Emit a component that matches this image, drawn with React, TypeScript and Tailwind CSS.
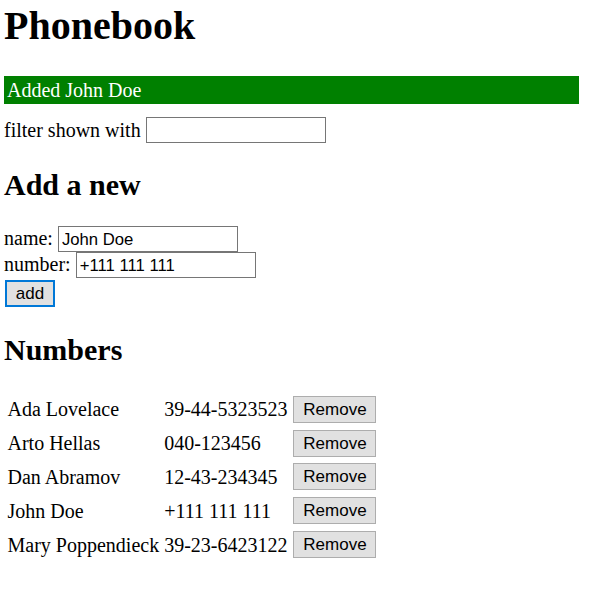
const persons = [
  { name: "Ada Lovelace", number: "39-44-5323523" },
  { name: "Arto Hellas", number: "040-123456" },
  { name: "Dan Abramov", number: "12-43-234345" },
  { name: "John Doe", number: "+111 111 111" },
  { name: "Mary Poppendieck", number: "39-23-6423122" },
];

const inputCls =
  "h-[26px] w-[180px] border border-[#767676] bg-white pl-[3px] pt-[2px] font-['Liberation_Sans',Arial,sans-serif] text-[16.7px] text-black outline-none";

const App = () => {
  return (
    <div className="min-h-[602px] bg-white px-[4px] pt-[3px] font-['Liberation_Serif','Times_New_Roman',serif] text-[20px] leading-[23px] text-black">
      <h1 className="mb-[27px] text-[40px] font-bold leading-[46px]">Phonebook</h1>

      <div className="w-[575px] bg-[#008000] px-[3px] py-[2.5px] text-white">Added John Doe</div>

      <div className="mt-[13px] flex h-[26px] items-center">
        <span>filter shown with</span>
        <input className={`${inputCls} ml-[5px]`} defaultValue="" />
      </div>

      <h2 className="mt-[24px] mb-[23.5px] text-[30px] font-bold leading-[35px]">Add a new</h2>

      <form onSubmit={(e) => e.preventDefault()}>
        <div className="flex h-[26px] items-center">
          <span>name:</span>
          <input className={`${inputCls} ml-[5px]`} defaultValue="John Doe" />
        </div>
        <div className="flex h-[26px] items-center">
          <span>number:</span>
          <input className={`${inputCls} ml-[5px]`} defaultValue="+111 111 111" />
        </div>
        <div className="mt-[2px] flex">
          <button
            type="submit"
            className="ml-[1px] h-[27px] w-[50px] border-2 border-[#0078d7] bg-[#e1e1e1] font-['Liberation_Sans',Arial,sans-serif] text-[17px] leading-none"
          >
            add
          </button>
        </div>
      </form>

      <h2 className="mt-[25px] mb-[25px] text-[30px] font-bold leading-[35px]">Numbers</h2>

      <table className="border-separate border-spacing-[2.5px]">
        <tbody>
          {persons.map((p) => (
            <tr key={p.name}>
              <td className="px-[1.5px] py-[2.4px] pt-[3.5px] whitespace-nowrap">{p.name}</td>
              <td className="py-[2.4px] pt-[3.5px] pr-[2.5px] pl-[1.5px] whitespace-nowrap">{p.number}</td>
              <td className="px-[1.5px] py-[2.4px]">
                <button className="block h-[27px] w-[83px] border border-[#adadad] bg-[#e1e1e1] font-['Liberation_Sans',Arial,sans-serif] text-[17px] leading-none">
                  Remove
                </button>
              </td>
            </tr>
          ))}
        </tbody>
      </table>
    </div>
  );
};

export default App;
